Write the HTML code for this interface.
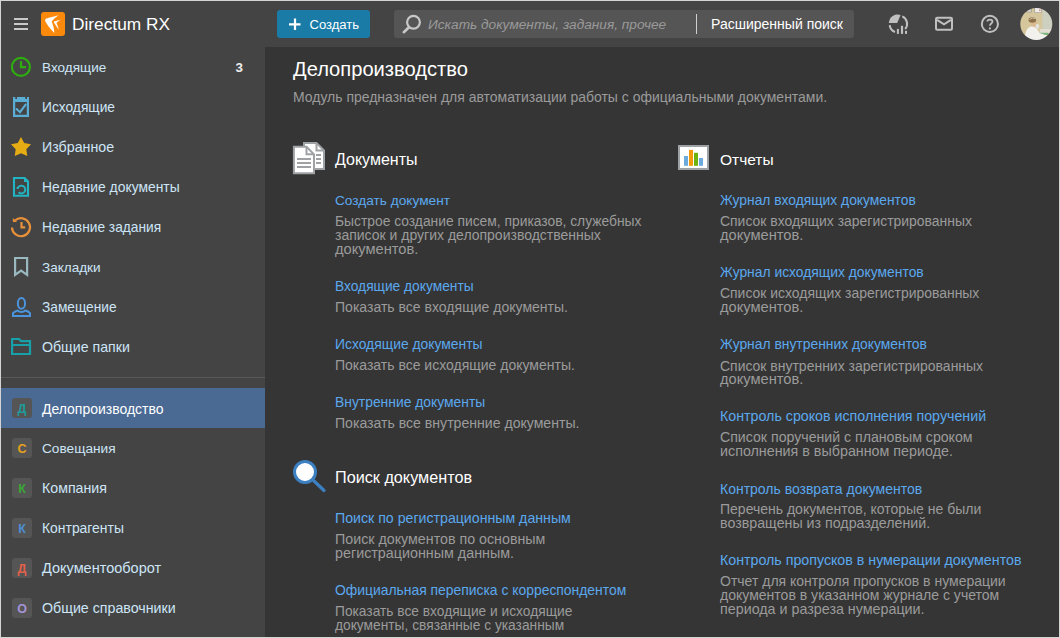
<!DOCTYPE html>
<html><head><meta charset="utf-8">
<style>
*{box-sizing:border-box;margin:0;padding:0}
html,body{width:1060px;height:638px;overflow:hidden;background:#d4d4d4;font-family:"Liberation Sans",sans-serif;position:relative}
.abs{position:absolute}
.t{position:absolute;white-space:nowrap;line-height:1}
svg{position:absolute;overflow:visible}
</style></head><body>

<div class="abs" style="left:1px;top:1px;width:1058px;height:636px;background:#444"></div>
<div class="abs" style="left:265px;top:47px;width:794px;height:590px;background:#353535"></div>
<div class="abs" style="left:14px;top:18px;width:14px;height:2px;background:#c8c8c8"></div>
<div class="abs" style="left:14px;top:23px;width:14px;height:2px;background:#c8c8c8"></div>
<div class="abs" style="left:14px;top:28px;width:14px;height:2px;background:#c8c8c8"></div>
<div class="abs" style="left:41px;top:12px;width:24px;height:24px;background:#fb8a0c;border-radius:3px"></div>
<div class="abs" style="left:277px;top:10px;width:93px;height:28px;background:#1a7ba7;border-radius:3px"></div>
<div class="abs" style="left:394px;top:10px;width:460px;height:28px;background:#555;border-radius:3px"></div>
<div class="abs" style="left:696px;top:14px;width:1px;height:20px;background:#cfcfcf"></div>
<div id="e0" class="t" style="left:72px;top:16.00px;font-size:17.296px;color:#fff;">Directum RX</div>
<div id="e1" class="t" style="left:309.5px;top:18.00px;font-size:13.055px;color:#fff;">Создать</div>
<div id="e2" class="t" style="left:428px;top:18.00px;font-size:13.669px;color:#9a9a9a;font-style:italic">Искать документы, задания, прочее</div>
<div id="e3" class="t" style="left:711px;top:17.00px;font-size:14.023px;color:#fff;">Расширенный поиск</div>
<div id="e4" class="t" style="left:42px;top:61.00px;font-size:13.572px;color:#cde5f6;">Входящие</div>
<div id="e5" class="t" style="left:42px;top:101.00px;font-size:13.777px;color:#cde5f6;">Исходящие</div>
<div id="e6" class="t" style="left:42px;top:140.00px;font-size:14.230px;color:#cde5f6;">Избранное</div>
<div id="e7" class="t" style="left:42px;top:181.00px;font-size:13.884px;color:#cde5f6;">Недавние документы</div>
<div id="e8" class="t" style="left:42px;top:221.00px;font-size:13.724px;color:#cde5f6;">Недавние задания</div>
<div id="e9" class="t" style="left:42px;top:261.00px;font-size:13.541px;color:#cde5f6;">Закладки</div>
<div id="e10" class="t" style="left:42px;top:301.00px;font-size:13.732px;color:#cde5f6;">Замещение</div>
<div id="e11" class="t" style="left:42px;top:340.00px;font-size:14.176px;color:#cde5f6;">Общие папки</div>
<div id="e12" class="t" style="left:235.5px;top:61.00px;font-size:13.400px;color:#eee;font-weight:bold">3</div>
<div class="abs" style="left:1px;top:377px;width:264px;height:1px;background:#595959"></div>
<div class="abs" style="left:1px;top:388px;width:264px;height:40px;background:#4a6a94"></div>
<div class="abs" style="left:12px;top:398px;width:20px;height:20px;background:#555;border-radius:3px"></div>
<div id="e13" class="t" style="left:16.5px;top:403.00px;font-size:12.500px;color:#1e9c9c;font-weight:bold;width:11px;text-align:center">Д</div>
<div id="e14" class="t" style="left:42px;top:402.00px;font-size:13.978px;color:#fff;">Делопроизводство</div>
<div class="abs" style="left:12px;top:438px;width:20px;height:20px;background:#555;border-radius:3px"></div>
<div id="e15" class="t" style="left:16.5px;top:443.00px;font-size:12.500px;color:#e6a21c;font-weight:bold;width:11px;text-align:center">С</div>
<div id="e16" class="t" style="left:42px;top:442.00px;font-size:13.662px;color:#cde5f6;">Совещания</div>
<div class="abs" style="left:12px;top:478px;width:20px;height:20px;background:#555;border-radius:3px"></div>
<div id="e17" class="t" style="left:16.5px;top:483.00px;font-size:12.500px;color:#3aa835;font-weight:bold;width:11px;text-align:center">К</div>
<div id="e18" class="t" style="left:42px;top:481.00px;font-size:14.193px;color:#cde5f6;">Компания</div>
<div class="abs" style="left:12px;top:518px;width:20px;height:20px;background:#555;border-radius:3px"></div>
<div id="e19" class="t" style="left:16.5px;top:523.00px;font-size:12.500px;color:#4d8fd6;font-weight:bold;width:11px;text-align:center">К</div>
<div id="e20" class="t" style="left:42px;top:522.00px;font-size:13.910px;color:#cde5f6;">Контрагенты</div>
<div class="abs" style="left:12px;top:558px;width:20px;height:20px;background:#555;border-radius:3px"></div>
<div id="e21" class="t" style="left:16.5px;top:563.00px;font-size:12.500px;color:#e2614b;font-weight:bold;width:11px;text-align:center">Д</div>
<div id="e22" class="t" style="left:42px;top:561.00px;font-size:14.514px;color:#cde5f6;">Документооборот</div>
<div class="abs" style="left:12px;top:598px;width:20px;height:20px;background:#555;border-radius:3px"></div>
<div id="e23" class="t" style="left:16.5px;top:603.00px;font-size:12.500px;color:#a593d6;font-weight:bold;width:11px;text-align:center">О</div>
<div id="e24" class="t" style="left:42px;top:601.00px;font-size:14.230px;color:#cde5f6;">Общие справочники</div>
<div id="e25" class="t" style="left:293px;top:59.00px;font-size:20.140px;color:#fff;">Делопроизводство</div>
<div id="e26" class="t" style="left:293px;top:91.00px;font-size:13.971px;color:#9b9b9b;">Модуль предназначен для автоматизации работы с официальными документами.</div>
<div id="e27" class="t" style="left:335px;top:152.00px;font-size:16.000px;color:#fff;">Документы</div>
<div id="e28" class="t" style="left:720px;top:152.00px;font-size:15.538px;color:#fff;">Отчеты</div>
<div id="e29" class="t" style="left:335px;top:469.00px;font-size:16.215px;color:#fff;">Поиск документов</div>
<div id="e30" class="t" style="left:335px;top:194.00px;font-size:13.684px;color:#5ba8ee;">Создать документ</div>
<div id="e31" class="t" style="left:335px;top:215.00px;font-size:13.837px;color:#9b9b9b;">Быстрое создание писем, приказов, служебных</div>
<div id="e32" class="t" style="left:335px;top:228.00px;font-size:14.003px;color:#9b9b9b;">записок и других делопроизводственных</div>
<div id="e33" class="t" style="left:335px;top:242.00px;font-size:14.671px;color:#9b9b9b;">документов.</div>
<div id="e34" class="t" style="left:335px;top:280.00px;font-size:13.781px;color:#5ba8ee;">Входящие документы</div>
<div id="e35" class="t" style="left:335px;top:300.00px;font-size:14.047px;color:#9b9b9b;">Показать все входящие документы.</div>
<div id="e36" class="t" style="left:335px;top:338.00px;font-size:13.889px;color:#5ba8ee;">Исходящие документы</div>
<div id="e37" class="t" style="left:335px;top:358.00px;font-size:14.015px;color:#9b9b9b;">Показать все исходящие документы.</div>
<div id="e38" class="t" style="left:335px;top:396.00px;font-size:13.867px;color:#5ba8ee;">Внутренние документы</div>
<div id="e39" class="t" style="left:335px;top:416.00px;font-size:14.095px;color:#9b9b9b;">Показать все внутренние документы.</div>
<div id="e40" class="t" style="left:335px;top:511.00px;font-size:14.171px;color:#5ba8ee;">Поиск по регистрационным данным</div>
<div id="e41" class="t" style="left:335px;top:532.00px;font-size:14.265px;color:#9b9b9b;">Поиск документов по основным</div>
<div id="e42" class="t" style="left:335px;top:546.00px;font-size:14.326px;color:#9b9b9b;">регистрационным данным.</div>
<div id="e43" class="t" style="left:335px;top:584.00px;font-size:13.901px;color:#5ba8ee;">Официальная переписка с корреспондентом</div>
<div id="e44" class="t" style="left:335px;top:605.00px;font-size:13.765px;color:#9b9b9b;">Показать все входящие и исходящие</div>
<div id="e45" class="t" style="left:335px;top:619.00px;font-size:13.776px;color:#9b9b9b;">документы, связанные с указанным</div>
<div id="e46" class="t" style="left:720px;top:194.00px;font-size:13.828px;color:#5ba8ee;">Журнал входящих документов</div>
<div id="e47" class="t" style="left:720px;top:215.00px;font-size:13.956px;color:#9b9b9b;">Список входящих зарегистрированных</div>
<div id="e48" class="t" style="left:720px;top:228.00px;font-size:14.671px;color:#9b9b9b;">документов.</div>
<div id="e49" class="t" style="left:720px;top:266.00px;font-size:13.865px;color:#5ba8ee;">Журнал исходящих документов</div>
<div id="e50" class="t" style="left:720px;top:287.00px;font-size:13.952px;color:#9b9b9b;">Список исходящих зарегистрированных</div>
<div id="e51" class="t" style="left:720px;top:300.00px;font-size:14.671px;color:#9b9b9b;">документов.</div>
<div id="e52" class="t" style="left:720px;top:338.00px;font-size:13.876px;color:#5ba8ee;">Журнал внутренних документов</div>
<div id="e53" class="t" style="left:720px;top:359.00px;font-size:13.981px;color:#9b9b9b;">Список внутренних зарегистрированных</div>
<div id="e54" class="t" style="left:720px;top:372.00px;font-size:14.671px;color:#9b9b9b;">документов.</div>
<div id="e55" class="t" style="left:720px;top:409.00px;font-size:14.248px;color:#5ba8ee;">Контроль сроков исполнения поручений</div>
<div id="e56" class="t" style="left:720px;top:430.00px;font-size:14.159px;color:#9b9b9b;">Список поручений с плановым сроком</div>
<div id="e57" class="t" style="left:720px;top:444.00px;font-size:14.300px;color:#9b9b9b;">исполнения в выбранном периоде.</div>
<div id="e58" class="t" style="left:720px;top:482.00px;font-size:13.992px;color:#5ba8ee;">Контроль возврата документов</div>
<div id="e59" class="t" style="left:720px;top:502.00px;font-size:14.016px;color:#9b9b9b;">Перечень документов, которые не были</div>
<div id="e60" class="t" style="left:720px;top:516.00px;font-size:14.244px;color:#9b9b9b;">возвращены из подразделений.</div>
<div id="e61" class="t" style="left:720px;top:553.00px;font-size:14.220px;color:#5ba8ee;">Контроль пропусков в нумерации документов</div>
<div id="e62" class="t" style="left:720px;top:574.00px;font-size:14.016px;color:#9b9b9b;">Отчет для контроля пропусков в нумерации</div>
<div id="e63" class="t" style="left:720px;top:588.00px;font-size:14.043px;color:#9b9b9b;">документов в указанном журнале с учетом</div>
<div id="e64" class="t" style="left:720px;top:602.00px;font-size:14.301px;color:#9b9b9b;">периода и разреза нумерации.</div>
<!-- logo -->
<svg style="left:41px;top:12px" width="24" height="24" viewBox="0 0 24 24">
<path fill="#fff" d="M17.4,3.2 C13,4.4 8,5.5 5.5,6.5 C4.1,7.1 3.8,8.2 4.4,9.4 C6.5,13.2 10,17.6 13.3,20.9 C13.4,17.3 11.9,13.1 10.7,9.6 C11.8,7.8 14.6,5.4 17.4,3.2 Z"/>
<path fill="#fff" d="M20,7.8 C17.5,8.4 15,8.9 13.5,9.3 C12.8,9.6 12.7,10.2 13,10.8 C14.5,13.2 16.2,15.7 17.8,17.8 C17.5,15.5 16.5,13 15.5,10.9 C16.6,9.8 18.3,8.7 20,7.8 Z"/>
</svg>
<!-- plus -->
<svg style="left:288px;top:18px" width="14" height="14" viewBox="0 0 14 14">
<path stroke="#fff" stroke-width="2.2" d="M7,0.6 V12.1 M1,6.35 H12.5"/>
</svg>
<!-- search magnifier -->
<svg style="left:400px;top:12px" width="26" height="24" viewBox="400 12 26 24">
<circle cx="413.5" cy="22.3" r="6.4" fill="none" stroke="#c8c8c8" stroke-width="2.2"/>
<path d="M409,27.2 L403.8,32.2" stroke="#c8c8c8" stroke-width="2.6" stroke-linecap="round"/>
</svg>
<!-- pie icon -->
<svg style="left:884px;top:10px" width="28" height="28" viewBox="884 10 28 28">
<path fill="#c0c0c0" d="M888.8,23 A9.1,9.1 0 0 1 900.6,14.9 L897.2,23 Z"/>
<path fill="none" stroke="#c0c0c0" stroke-width="2" d="M902.3,16.3 A8.2,8.2 0 0 1 905.2,29"/>
<path fill="none" stroke="#c0c0c0" stroke-width="2" d="M889.7,25.2 A8.2,8.2 0 0 0 895,32"/>
<rect x="896.9" y="28.9" width="2" height="5" fill="#c0c0c0"/>
<rect x="900.9" y="25.8" width="2.2" height="8.1" fill="#c0c0c0"/>
<rect x="905" y="30.8" width="2" height="3.1" fill="#c0c0c0"/>
</svg>
<!-- mail -->
<svg style="left:930px;top:10px" width="28" height="28" viewBox="930 10 28 28">
<rect x="936" y="17.8" width="16" height="12" rx="1.2" fill="none" stroke="#c0c0c0" stroke-width="2"/>
<path d="M937,19.8 L944,24.4 L951,19.8" fill="none" stroke="#c0c0c0" stroke-width="2"/>
</svg>
<!-- help -->
<svg style="left:976px;top:10px" width="28" height="28" viewBox="976 10 28 28">
<circle cx="989.9" cy="23.9" r="8.1" fill="none" stroke="#c0c0c0" stroke-width="2"/>
<path d="M987.4,21.6 C987.4,19.2 992.5,19 992.5,21.5 C992.5,23.4 989.9,23.6 989.9,25.8" fill="none" stroke="#c0c0c0" stroke-width="1.8"/>
<circle cx="989.9" cy="28.4" r="1.1" fill="#c0c0c0"/>
</svg>
<!-- avatar -->
<svg style="left:1020px;top:8px" width="32" height="32" viewBox="0 0 32 32">
<defs><clipPath id="av"><circle cx="16.3" cy="16" r="16"/></clipPath><filter id="bl" x="-10%" y="-10%" width="120%" height="120%"><feGaussianBlur stdDeviation="0.55"/></filter></defs>
<g clip-path="url(#av)"><g filter="url(#bl)">
<rect x="-2" y="-2" width="36" height="36" fill="#d6c69c"/>
<rect x="22.3" y="-2" width="12" height="23" fill="#cdcfbf"/>
<rect x="6.3" y="0.5" width="5.4" height="4" fill="#a39d92"/>
<rect x="7.2" y="1.2" width="3.6" height="2.6" fill="#d8d5cf"/>
<rect x="14.2" y="-1" width="7.5" height="5.8" fill="#a8a39a"/>
<rect x="15" y="0" width="6" height="4.2" fill="#eeebe8"/>
<rect x="19" y="1.5" width="1.6" height="1.2" fill="#c77d80"/>
<rect x="19.8" y="21" width="14" height="5" fill="#e3ded3"/>
<rect x="19.5" y="24.8" width="9" height="2.5" fill="#79b57c"/>
<rect x="22" y="27" width="12" height="6" fill="#ddd3bd"/>
<ellipse cx="14" cy="16" rx="3" ry="4" fill="#d9b98f"/>
<ellipse cx="12.3" cy="12" rx="3.8" ry="2.8" fill="#8e7048"/>
<path d="M9.5,11.5 Q12,9 15.5,10.5" stroke="#d8d0c0" stroke-width="0.9" fill="none"/>
<ellipse cx="17.3" cy="18.3" rx="1.9" ry="2.6" fill="#e4e2dc"/>
<path d="M4.5,34 C4.5,25 7,18.5 11.5,18.5 C15,18.5 17.5,21 19.5,25 L27,27.5 L25,32 L18,34 Z" fill="#f2f1ee"/>
</g></g>
</svg>
<!-- sidebar icons -->
<svg style="left:8px;top:54px" width="26" height="26" viewBox="8 54 26 26">
<circle cx="20.9" cy="66.9" r="9" fill="none" stroke="#2eac10" stroke-width="2.2"/>
<path d="M21,61 V67.1 H26" fill="none" stroke="#2eac10" stroke-width="2.2"/>
</svg>
<svg style="left:8px;top:94px" width="26" height="26" viewBox="8 94 26 26">
<path fill="#5aaed6" fill-rule="evenodd" d="M13,97 H15.3 V99 H17 V97 H25.3 V99 H27 V97 H29 V117 H13 Z M15.2,102 V114.8 H26.8 V102 Z"/>
<path d="M16.6,109 L20,112.2 L25.6,104.6" fill="none" stroke="#5aaed6" stroke-width="2.1" stroke-linecap="round"/>
</svg>
<svg style="left:8px;top:134px" width="26" height="26" viewBox="8 134 26 26">
<path fill="#e6ac14" d="M21,137 L24.2,142.9 L31,144.3 L26.3,149.3 L27.3,156 L21,153.3 L14.7,156 L15.7,149.3 L11,144.3 L17.8,142.9 Z"/>
</svg>
<svg style="left:8px;top:174px" width="26" height="26" viewBox="8 174 26 26">
<path d="M14,178 H24.6 L28,181.4 V195.8 H14 Z" fill="none" stroke="#22b4c2" stroke-width="2.1" stroke-linejoin="miter"/>
<path d="M24,177.2 L28.8,182 L24,182 Z" fill="#22b4c2"/>
<path d="M16.6,188.1 H17.8 A3.9,3.9 0 1 1 18.6,192.3" fill="none" stroke="#22b4c2" stroke-width="2"/>
</svg>
<svg style="left:8px;top:214px" width="26" height="26" viewBox="8 214 26 26">
<path d="M12,227.5 A9,9 0 1 0 15,220.5" fill="none" stroke="#e8903a" stroke-width="2.2"/>
<path d="M12.9,217.9 L12.9,221.9 L17,221.9 Z" fill="#e8903a"/>
<path d="M21.5,222 V227.3 H25.2" fill="none" stroke="#e8903a" stroke-width="2.2"/>
</svg>
<svg style="left:8px;top:254px" width="26" height="26" viewBox="8 254 26 26">
<path d="M15.1,258 H27.1 V274.9 L21.1,270.6 L15.1,274.9 Z" fill="none" stroke="#9ab8c0" stroke-width="2.2"/>
</svg>
<svg style="left:8px;top:294px" width="26" height="26" viewBox="8 294 26 26">
<ellipse cx="21.45" cy="303.4" rx="3.6" ry="5.4" fill="none" stroke="#4a95dd" stroke-width="2"/>
<path d="M13,316 V313.2 C14,312 16,311 17.8,310.6 C19.5,312.5 23.4,312.5 25.1,310.6 C27,311 29,312 30,313.2 V316 Z" fill="none" stroke="#4a95dd" stroke-width="2"/>
</svg>
<svg style="left:8px;top:334px" width="26" height="26" viewBox="8 334 26 26">
<path d="M12.1,339 H19 L21,341.2 H30 V354 H12.1 Z M12.1,345 H30" fill="none" stroke="#17a0a8" stroke-width="2.2"/>
</svg>
<!-- content icons -->
<svg style="left:290px;top:139px" width="40" height="40" viewBox="290 139 40 40">
<path d="M304,143 H316.5 L324,150.5 V169 H304 Z" fill="#fff" stroke="#9ea2a5" stroke-width="2"/>
<path d="M316.5,143 V150.5 H324" fill="none" stroke="#9ea2a5" stroke-width="2"/>
<path d="M316,155 H321 M316,159 H321 M316,163 H321" stroke="#9ea2a5" stroke-width="1.8"/>
<path d="M293.9,146.8 H306.5 L314,154.3 V173.2 H293.9 Z" fill="#fff" stroke="#9ea2a5" stroke-width="2"/>
<path d="M306.5,146.8 V154.3 H314" fill="none" stroke="#9ea2a5" stroke-width="2"/>
<path d="M297,159 H311 M297,163 H311 M297,167 H311" stroke="#9ea2a5" stroke-width="1.8"/>
</svg>
<svg style="left:676px;top:143px" width="36" height="30" viewBox="676 143 36 30">
<rect x="679" y="146" width="29" height="23" fill="#fff" stroke="#9ea2a5" stroke-width="2"/>
<rect x="684" y="156" width="4" height="9.8" fill="#6aaadd"/>
<rect x="689" y="149.9" width="4" height="15.9" fill="#f29a0c"/>
<rect x="694" y="152.8" width="4" height="13" fill="#6cb30f"/>
<rect x="699" y="158" width="4" height="7.8" fill="#6aaadd"/>
</svg>
<svg style="left:288px;top:455px" width="42" height="42" viewBox="288 455 42 42">
<path d="M313.5,480.5 L324,490.5" stroke="#3d80c2" stroke-width="3.2" stroke-linecap="round"/>
<circle cx="305" cy="472" r="10.5" fill="#fff" stroke="#3d80c2" stroke-width="3"/>
</svg>

<div class="abs" style="left:0;top:637px;width:1060px;height:1px;background:#d4d4d4"></div>
</body></html>
